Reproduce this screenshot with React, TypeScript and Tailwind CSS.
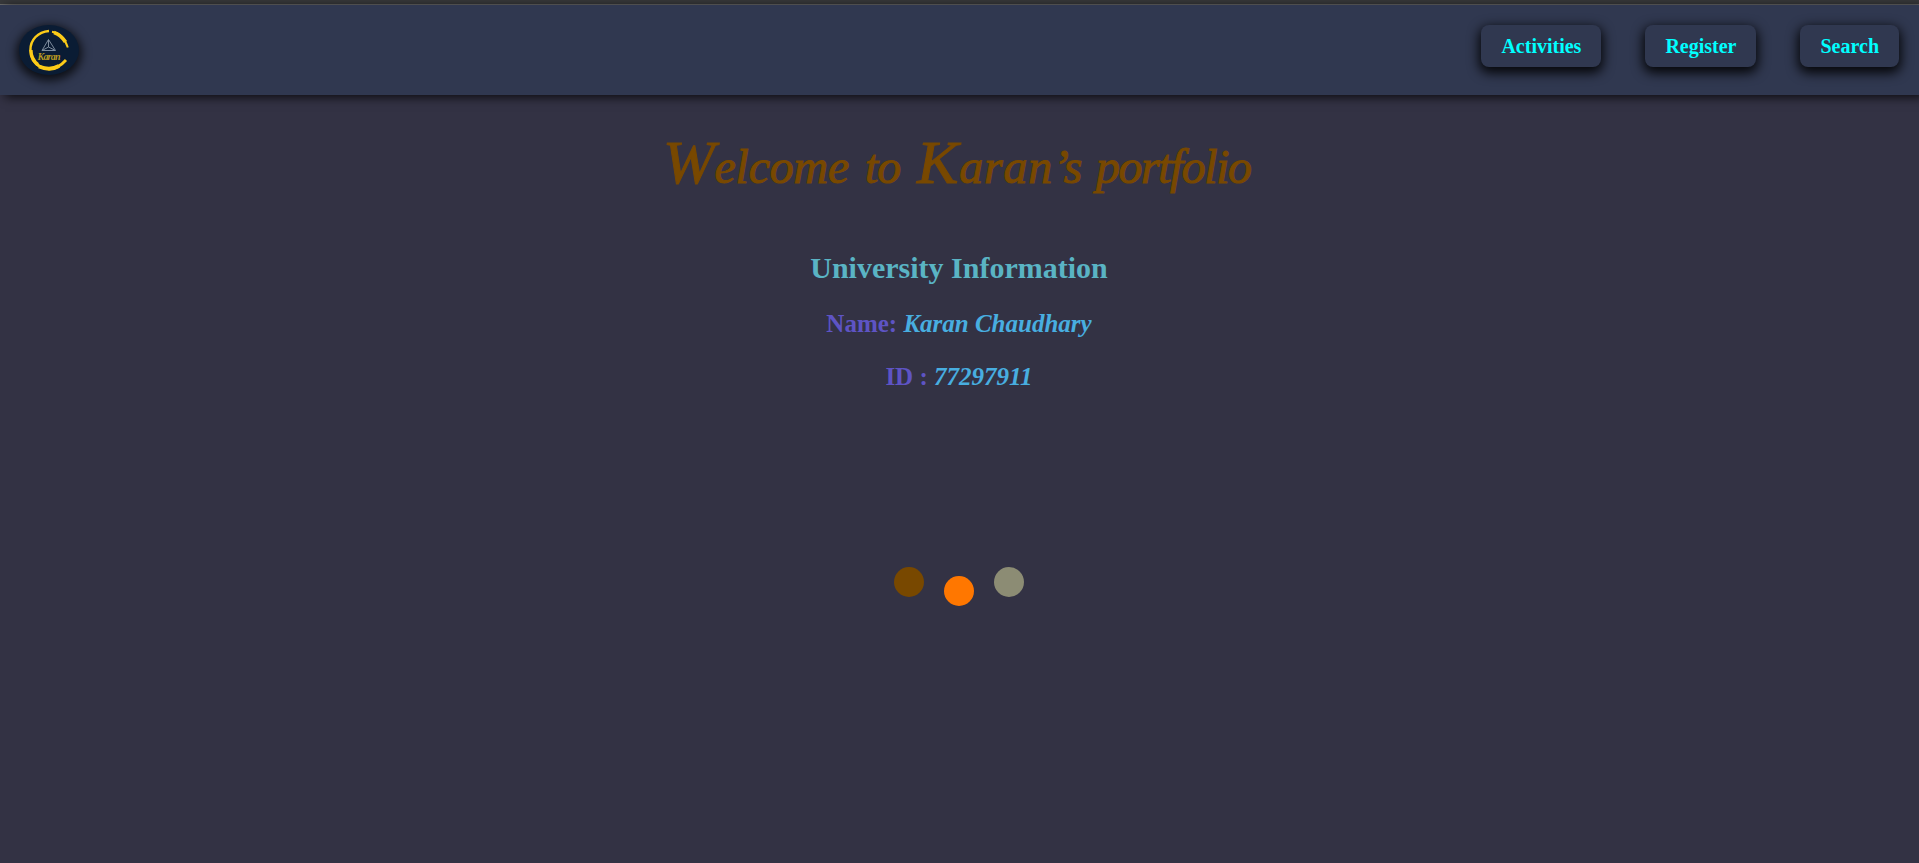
import React from "react";

const navItems = ["Activities", "Register", "Search"];

function Logo() {
  return (
    <svg viewBox="0 0 60 50" className="h-[50px] w-[60px] rounded-[50%] bg-[#0a1c34] shadow-[0_3px_10px_3px_#000000b8]">
      <g fill="none" stroke="#fbcb18">
        <path d="M30 6C19 7 11.200 14.500 11.400 25.500C11.600 33 15 38.500 21 41.500" strokeWidth="2.500" />
        <path d="M12 25C12 31 14.500 36 19 39.500" strokeWidth="3.200" />
        <path d="M17 38.500C20 41 20 41.500 23 42.500C32 45.500 40 43 47 35" strokeWidth="2.800" />
        <path d="M20 41.500C27 44.500 34 44.500 40 41" strokeWidth="3.800" />
        <path d="M33 6.700C41 8 46 14 48.800 22.500" strokeWidth="2" />
        <path d="M35 7.500C40 9 43.500 12.500 46.500 17" strokeWidth="3.800" />
      </g>
      <path d="M29.500 14.500L23 25.500H36.500ZM29.500 15V22L24 25M29.500 22L35.500 25" fill="none" stroke="#8997a8" strokeWidth="0.900" />
      <text x="18.500" y="35" textLength="23" fontSize="10" fontStyle="italic" fontFamily="Liberation Serif, serif" fill="#b99a20">Karan</text>
    </svg>
  );
}

export default function App() {
  return (
    <div className="flex h-[863px] w-full flex-col overflow-hidden bg-[#333244] font-['Liberation_Serif',serif] font-bold">
      <div className="h-[5px] shrink-0 border-b border-[#6a6a6a] bg-[#38393b]" />
      <header className="flex h-[90px] shrink-0 items-start justify-between bg-[#303850] pl-[19px] pr-5 pt-5 shadow-[5px_2px_10px_#000000cc]">
        <Logo />
        <nav className="flex gap-[44px]">
          {navItems.map((item) => (
            <a key={item} className="rounded-lg bg-[#303850] px-5 py-[10px] text-[20px] leading-[22px] text-[#00ffff] shadow-[0_4px_12px_2px_#000000e6]">
              {item}
            </a>
          ))}
        </nav>
      </header>
      <main className="flex flex-col items-center pr-px">
        <h1 className="mt-[35px] flex h-[75px] w-[592px] items-baseline whitespace-nowrap text-[48px] font-normal italic leading-[64px] text-[#784800] [-webkit-text-stroke:1px_#784800]">
          <span className="block w-[202px] tracking-[-0.2px] first-letter:text-[62px]">Welcome</span>
          <span className="block w-[52px] tracking-[-1px]">to</span>
          <span className="block w-[179px] tracking-[0.8px] first-letter:text-[62px]">Karan’s</span>
          <span className="block w-[159px] tracking-[-1.5px]">portfolio</span>
        </h1>
        <h2 className="mt-[46px] text-[30px] leading-[34px] text-[#5ab4c4]">University Information</h2>
        <p className="mt-[25px] text-[25px] leading-[28px] text-[#5e54c4]">
          Name: <em className="text-[#48aee0]">Karan Chaudhary</em>
        </p>
        <p className="mt-[25px] text-[25px] leading-[28px] text-[#5e54c4]">
          ID : <em className="text-[#48aee0]">77297911</em>
        </p>
        <div className="mt-[176px] flex gap-5">
          <span className="size-[30px] rounded-full bg-[#784800]" />
          <span className="mt-[9px] size-[30px] rounded-full bg-[#ff7700]" />
          <span className="size-[30px] rounded-full bg-[#8c8c74]" />
        </div>
      </main>
    </div>
  );
}
